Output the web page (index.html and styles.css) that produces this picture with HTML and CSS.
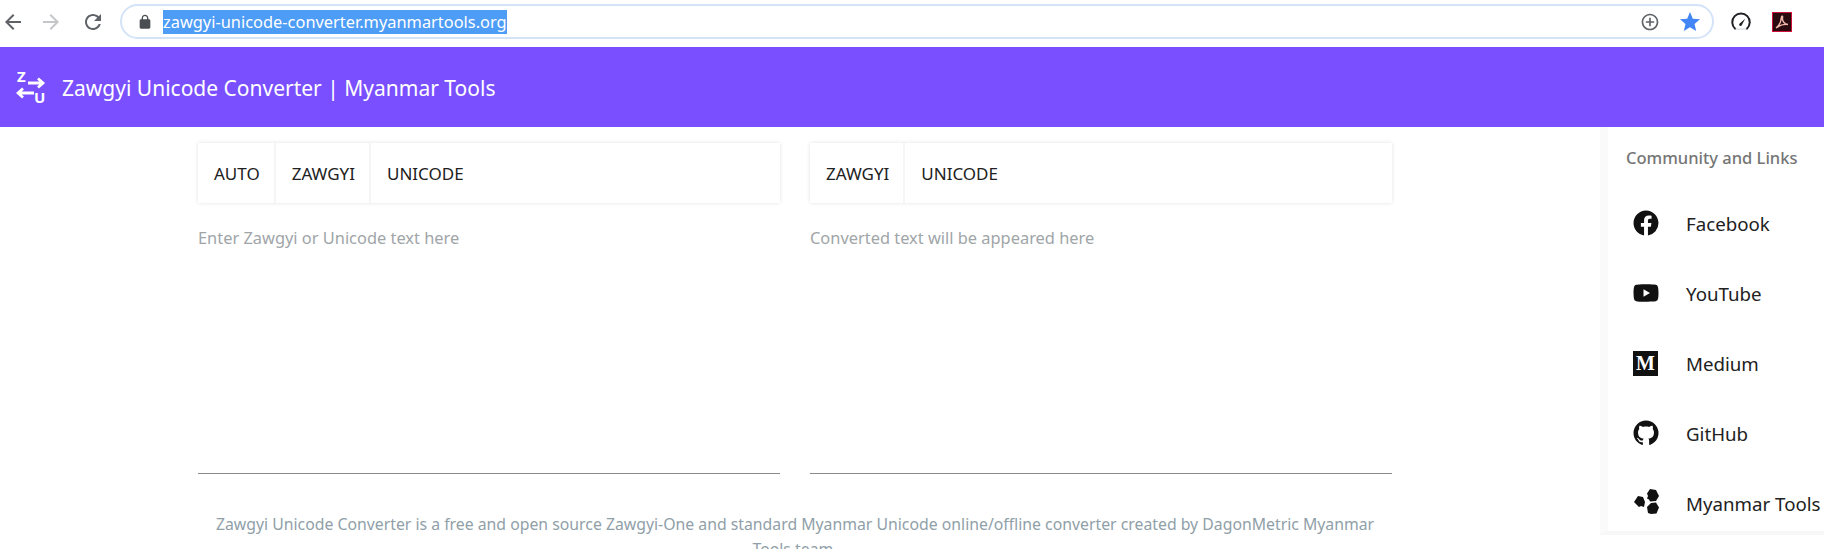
FILE: index.html
```html
<!DOCTYPE html>
<html lang="en">
<head>
  <meta charset="UTF-8">
  <title>Zawgyi Unicode Converter | Myanmar Tools</title>
  <meta name="viewport" content="width=device-width, initial-scale=1.0">
  <link rel="stylesheet" href="styles.css">
</head>
<body>

  <!-- Browser toolbar -->
  <div class="toolbar">
    <svg class="tool-icon" viewBox="0 0 24 24"><path d="M20 11H7.83l5.59-5.59L12 4l-8 8 8 8 1.41-1.41L7.83 13H20v-2z"/></svg>
    <svg class="tool-icon tool-forward" viewBox="0 0 24 24"><path d="M12 4l-1.41 1.41L16.17 11H4v2h12.17l-5.58 5.59L12 20l8-8z"/></svg>
    <svg class="tool-icon tool-reload" viewBox="0 0 24 24"><path d="M17.65 6.35C16.2 4.9 14.21 4 12 4c-4.42 0-7.99 3.58-7.99 8s3.57 8 7.99 8c3.73 0 6.84-2.55 7.73-6h-2.08c-.82 2.33-3.04 4-5.65 4-3.31 0-6-2.69-6-6s2.69-6 6-6c1.66 0 3.14.69 4.22 1.78L13 11h7V4l-2.35 2.35z"/></svg>
    <div class="address">
      <svg class="lock" viewBox="0 0 24 24"><path d="M18 8h-1V6c0-2.76-2.24-5-5-5S7 3.24 7 6v2H6c-1.1 0-2 .9-2 2v10c0 1.1.9 2 2 2h12c1.1 0 2-.9 2-2V10c0-1.1-.9-2-2-2zM9 6c0-1.66 1.34-3 3-3s3 1.34 3 3v2H9V6z"/></svg>
      <span class="url">zawgyi-unicode-converter.myanmartools.org</span>
      <svg class="addr-add" viewBox="0 0 24 24"><path d="M13 7h-2v4H7v2h4v4h2v-4h4v-2h-4V7zm-1-5C6.48 2 2 6.48 2 12s4.48 10 10 10 10-4.48 10-10S17.52 2 12 2zm0 18c-4.41 0-8-3.59-8-8s3.59-8 8-8 8 3.59 8 8-3.59 8-8 8z"/></svg>
      <svg class="addr-star" viewBox="0 0 24 24"><path d="M12 17.27L18.18 21l-1.64-7.03L22 9.24l-7.19-.61L12 2 9.19 8.63 2 9.24l5.46 4.73L5.82 21z"/></svg>
    </div>
    <svg class="ext-speed" viewBox="0 0 24 24"><path d="M5 20a10.500 10.500 0 1 1 14 0" fill="none" stroke="#202124" stroke-width="2.400" stroke-linecap="round"/><path d="M5.500 20.500h13" stroke="#d8dadc" stroke-width="1.500"/><path d="M10.800 13.500L17 8l-3.800 7.300a1.700 1.700 0 1 1-2.400-1.800z" fill="#202124"/></svg>
    <svg class="ext-pdf" viewBox="0 0 20 20"><rect x=".5" y=".5" width="19" height="19" fill="#2a0a0e" stroke="#d0103a"/><path d="M4 16c3-2 5-6 5.500-11 .2-1.500 1.500-1 1 1-.5 3 2 6 5.500 6.500-4-.5-8 .5-12 3.500z" fill="none" stroke="#f0b8ac" stroke-width="1.400"/></svg>
  </div>

  <!-- App bar -->
  <header class="app-bar">
    <svg class="logo" viewBox="0 -6 30 46">
      <text class="logo-letter" x="1" y="12">Z</text>
      <path d="M12 13h15M22 8.500l5 4.500-5 4.500" fill="none" stroke="#fff" stroke-width="2.800"/>
      <path d="M18 23H2M7 18.500L2 23l5 4.500" fill="none" stroke="#fff" stroke-width="2.800"/>
      <text class="logo-letter" x="18" y="33">U</text>
    </svg>
    <h1>Zawgyi Unicode Converter | Myanmar Tools</h1>
  </header>

  <div class="page">
    <main>
      <div class="panels">
        <section>
          <div class="tabs">
            <button class="tab">AUTO</button>
            <button class="tab">ZAWGYI</button>
            <button class="tab">UNICODE</button>
          </div>
          <textarea class="text-box" placeholder="Enter Zawgyi or Unicode text here"></textarea>
        </section>
        <section>
          <div class="tabs">
            <button class="tab">ZAWGYI</button>
            <button class="tab">UNICODE</button>
          </div>
          <textarea class="text-box" placeholder="Converted text will be appeared here"></textarea>
        </section>
      </div>
      <p class="about">Zawgyi Unicode Converter is a free and open source Zawgyi-One and standard Myanmar Unicode online/offline converter created by DagonMetric Myanmar Tools team.</p>
    </main>

    <!-- Sidebar links -->
    <aside>
      <h2>Community and Links</h2>
      <ul class="links">
        <li>
          <svg class="link-icon" viewBox="0 0 24 24"><path d="M12 2.040c-5.500 0-10 4.490-10 10.020 0 5 3.660 9.150 8.440 9.900v-7H7.900v-2.900h2.540V9.850c0-2.510 1.490-3.890 3.780-3.890 1.090 0 2.230.19 2.230.19v2.470h-1.260c-1.240 0-1.630.77-1.630 1.560v1.880h2.780l-.45 2.900h-2.330v7a10 10 0 0 0 8.440-9.900c0-5.530-4.500-10.020-10-10.020z"/></svg>
          Facebook
        </li>
        <li>
          <svg class="link-icon" viewBox="0 0 24 24"><path d="M10 15l5.190-3L10 9v6m11.560-7.830c.13.47.22 1.100.28 1.900.07.8.1 1.490.1 2.090L22 12c0 2.190-.16 3.800-.44 4.830-.25.9-.83 1.480-1.730 1.730-.47.13-1.330.22-2.650.28-1.300.07-2.490.1-3.590.1L12 19c-4.190 0-6.800-.16-7.830-.44-.9-.25-1.480-.83-1.730-1.730-.13-.47-.22-1.100-.28-1.900-.07-.8-.1-1.490-.1-2.090L2 12c0-2.190.16-3.800.44-4.830.25-.9.83-1.480 1.730-1.730.47-.13 1.330-.22 2.650-.28 1.300-.07 2.490-.1 3.590-.1L12 5c4.190 0 6.800.16 7.830.44.9.25 1.480.83 1.730 1.730z"/></svg>
          YouTube
        </li>
        <li>
          <span class="medium-icon">M</span>
          Medium
        </li>
        <li>
          <svg class="link-icon" viewBox="0 0 24 24"><path d="M12 2A10 10 0 0 0 2 12c0 4.420 2.870 8.170 6.840 9.500.5.08.66-.23.66-.5v-1.690c-2.770.6-3.360-1.340-3.360-1.340-.46-1.160-1.110-1.470-1.110-1.470-.91-.62.07-.6.07-.6 1 .07 1.530 1.030 1.530 1.030.87 1.520 2.340 1.070 2.910.83.09-.65.35-1.090.63-1.340-2.220-.25-4.550-1.110-4.550-4.920 0-1.110.38-2 1.030-2.710-.1-.25-.45-1.290.1-2.640 0 0 .84-.27 2.750 1.020.79-.22 1.650-.33 2.500-.33.85 0 1.710.11 2.500.33 1.910-1.290 2.750-1.020 2.750-1.020.55 1.350.2 2.390.1 2.640.65.71 1.030 1.600 1.030 2.710 0 3.820-2.340 4.660-4.570 4.910.36.31.69.92.69 1.850V21c0 .27.16.59.67.5C19.140 20.160 22 16.420 22 12A10 10 0 0 0 12 2z"/></svg>
          GitHub
        </li>
        <li>
          <svg class="link-icon" viewBox="0 0 30 30"><path d="M19 1l6 1 3 6-3 5-6 .5-1-2-2-1 1-2.500-1-2.500zM7 8l5 1 2 5-1 5-3-1-2 1-5-5zM20 15l5-.5 3 5-2.500 6-5.500.5-3-1-1-6z"/></svg>
          Myanmar Tools
        </li>
      </ul>
    </aside>
  </div>

</body>
</html>
```

FILE: styles.css
```css
/* Base styles */
html, body {
  height: 100%;
  overflow: hidden;
}

body {
  margin: 0;
  font-family: "Noto Sans", "Open Sans", sans-serif;
  color: #212121;
  background-color: white;
}

/* Browser toolbar */
.toolbar {
  display: flex;
  align-items: center;
  height: 47px;
  padding-left: 1px;
  box-sizing: border-box;
  background-color: white;
}

.tool-icon {
  flex: none;
  width: 24px;
  height: 24px;
  margin-top: -4px;
  fill: #5f6368;
}

.tool-forward {
  margin-left: 14px;
  fill: #c4c6c9;
}

.tool-reload {
  margin-left: 18px;
}

.address {
  flex: none;
  display: flex;
  align-items: center;
  width: 1594px;
  height: 35px;
  margin: -4px 0 0 15px;
  padding: 0 10px 0 15px;
  box-sizing: border-box;
  border: 2px solid #d4e3f8;
  border-radius: 18px;
}

.lock {
  flex: none;
  width: 16px;
  height: 16px;
  fill: #4a4d51;
}

.url {
  margin-left: 10px;
  padding: 2px 0;
  font-size: 16.400px;
  line-height: 20px;
  color: white;
  background-color: #4d9cf6;
  white-space: nowrap;
}

.addr-add {
  flex: none;
  width: 20px;
  height: 20px;
  margin-left: auto;
  fill: #5f6368;
}

.addr-star {
  flex: none;
  width: 24px;
  height: 24px;
  margin-left: 18px;
  fill: #4285f4;
}

.ext-speed {
  flex: none;
  width: 20px;
  height: 20px;
  margin: -4px 0 0 17px;
}

.ext-pdf {
  flex: none;
  width: 20px;
  height: 20px;
  margin: -4px 0 0 21px;
}

/* App bar */
.app-bar {
  display: flex;
  align-items: center;
  height: 80px;
  padding-left: 16px;
  box-sizing: border-box;
  background-color: #7a4fff;
  color: white;
}

.logo {
  flex: none;
  width: 30px;
  height: 46px;
}

.logo-letter {
  font-family: "Noto Sans", sans-serif;
  font-size: 15px;
  font-weight: 700;
  fill: white;
}

.app-bar h1 {
  margin: 1px 0 0 16px;
  font-size: 21px;
  font-weight: 400;
}

/* Page layout */
.page {
  display: flex;
  align-items: flex-start;
}

main {
  flex: none;
  width: 1600px;
  padding: 16px 208px 0 198px;
  box-sizing: border-box;
}

.panels {
  display: grid;
  grid-template-columns: 582px 582px;
  gap: 30px;
}

/* Tabs */
.tabs {
  display: flex;
  height: 60px;
  box-shadow: 0 0 4px rgba(0, 0, 0, 0.12);
}

.tab {
  padding: 0 14px 0 16px;
  border: none;
  border-right: 2px solid #f5f5f5;
  background: white;
  font-family: inherit;
  font-size: 17px;
  color: #212121;
}

.tab:last-child {
  border-right: none;
}

/* Text areas */
.text-box {
  display: block;
  width: 100%;
  height: 271px;
  padding: 22px 0 0;
  box-sizing: border-box;
  border: none;
  border-bottom: 1px solid #8a8a8a;
  outline: none;
  resize: none;
  background: transparent;
  font-family: inherit;
  font-size: 16.400px;
  line-height: 26px;
}

.text-box::placeholder {
  color: #a0a5a8;
  opacity: 1;
}

.about {
  margin: 38px 0 0;
  font-size: 15.800px;
  line-height: 25px;
  text-align: center;
  color: #90a0a8;
}

/* Sidebar */
aside {
  flex: none;
  width: 224px;
  height: 408px;
  padding: 19px 0 0 18px;
  box-sizing: border-box;
  border-left: 8px solid #fafafa;
  border-bottom: 4px solid #f7f7f7;
  white-space: nowrap;
}

aside h2 {
  margin: 0 0 18px;
  font-size: 16.500px;
  font-weight: 500;
  line-height: 24px;
  color: #757575;
}

.links {
  margin: 0;
  padding: 0;
  list-style: none;
}

.links li {
  display: flex;
  align-items: center;
  height: 70px;
  font-size: 18.700px;
  color: #212121;
}

.link-icon {
  flex: none;
  width: 30px;
  height: 30px;
  margin-left: 5px;
  margin-right: 25px;
  fill: #111;
}

.medium-icon {
  flex: none;
  width: 25px;
  height: 25px;
  margin-left: 7px;
  margin-right: 28px;
  background-color: #111;
  color: white;
  font-family: "Liberation Serif", serif;
  font-size: 20px;
  font-weight: 700;
  line-height: 25px;
  text-align: center;
}
```
